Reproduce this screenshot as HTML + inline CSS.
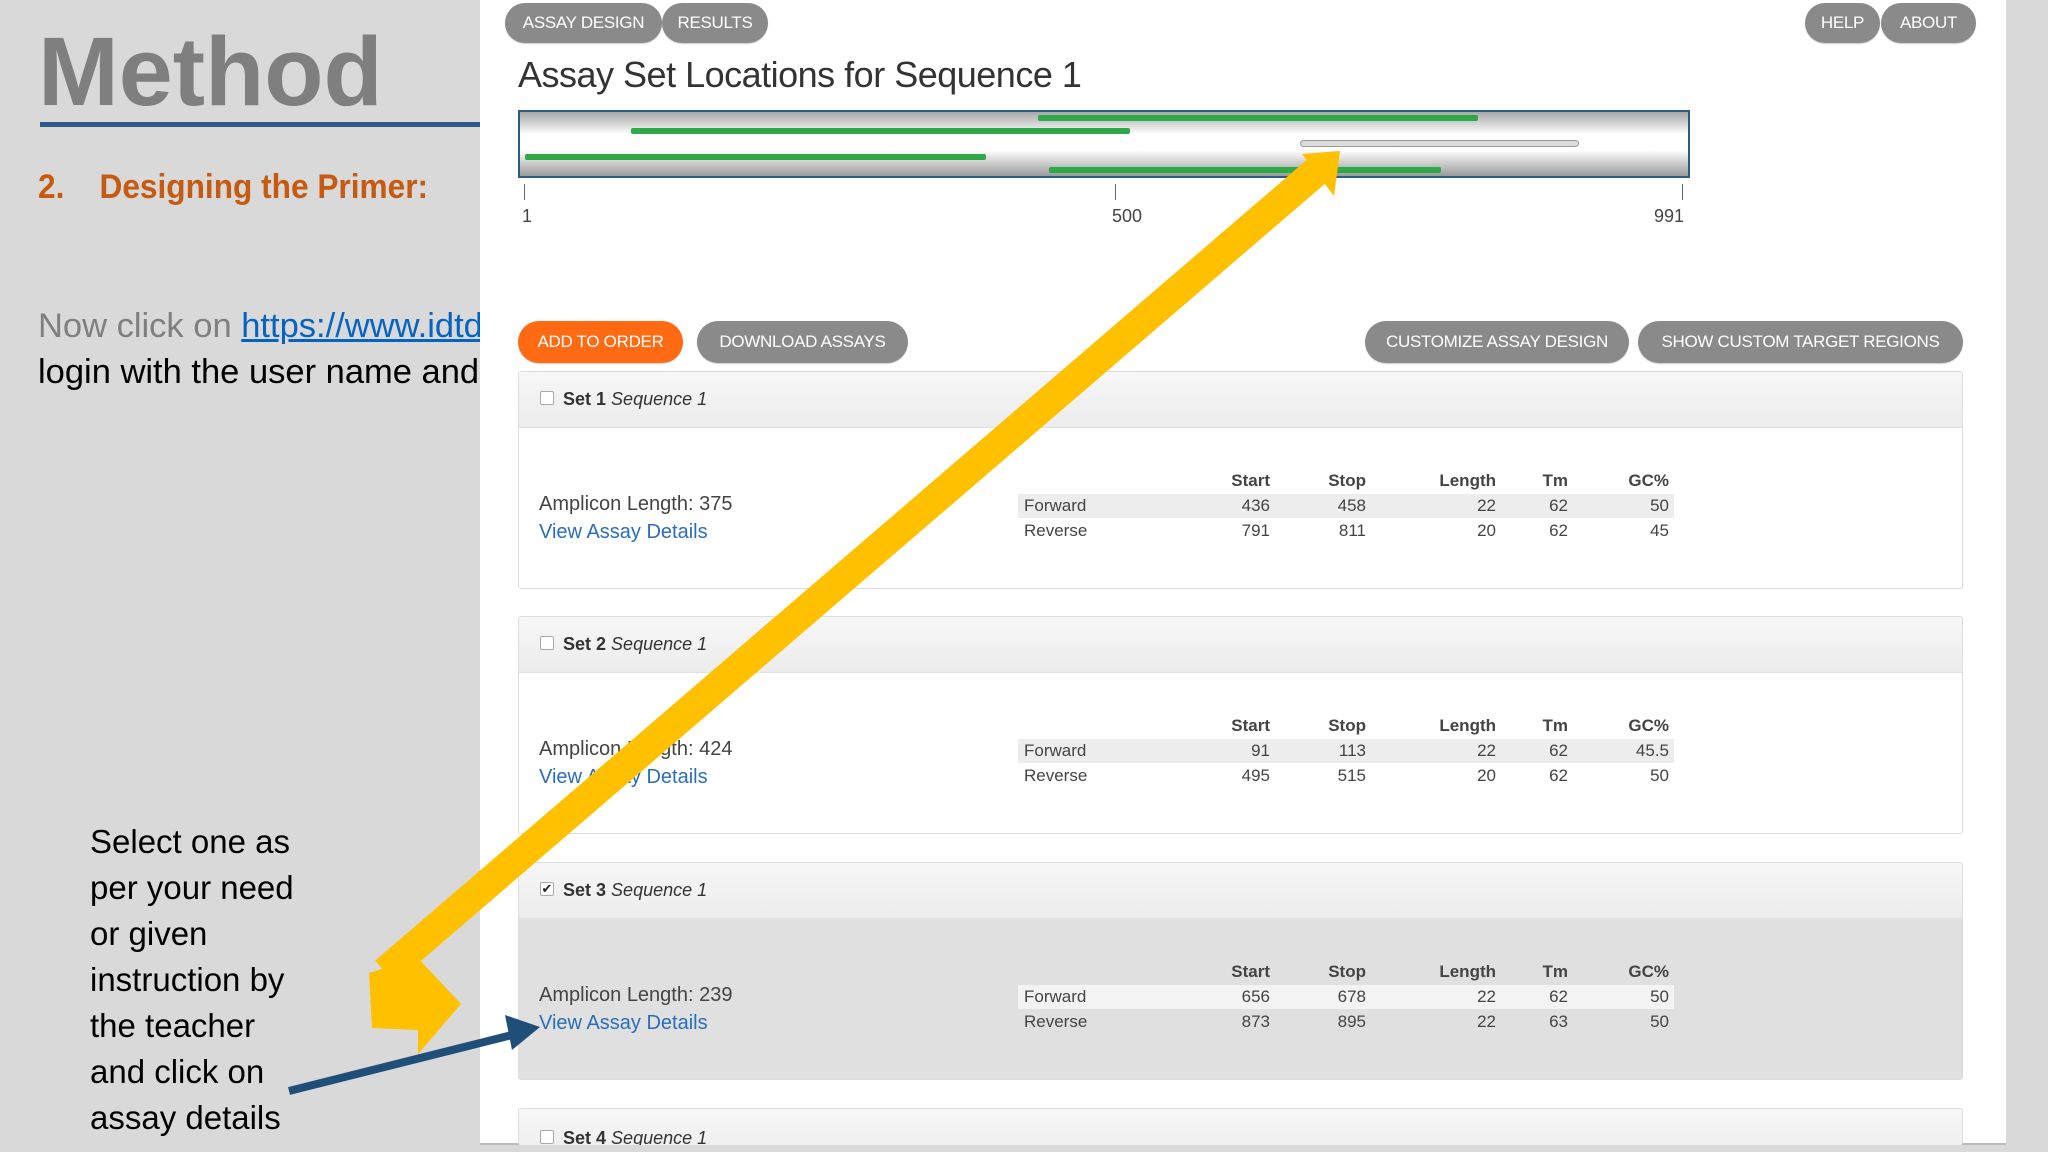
<!DOCTYPE html>
<html><head><meta charset="utf-8"><style>
*{margin:0;padding:0;box-sizing:border-box}
body{width:2048px;height:1152px;overflow:hidden;background:#d9d9d9;font-family:"Liberation Sans",sans-serif;position:relative}
.abs{position:absolute}
.web{left:480px;top:0;width:1526px;height:1145px;background:#fff;border-bottom:2px solid #bbb}
.pill{position:absolute;height:40px;border-radius:20px;background:#8a8a8a;color:#fff;font-size:17px;display:flex;align-items:center;justify-content:center;letter-spacing:-0.3px;box-shadow:0 1px 1px rgba(0,0,0,.2)}
.pill.o{background:#ff6a13}
.panel{position:absolute;left:518px;width:1445px;height:218px;border:1px solid #ddd;border-radius:3px;background:#fff;overflow:hidden}
.hd{height:56px;background:linear-gradient(#f7f7f7,#ececec);border-bottom:1px solid #e0e0e0;position:relative}
.cb{position:absolute;left:21px;top:19px;width:14px;height:14px;border:1px solid #aaa;border-radius:2px;background:#fff;font-size:13px;line-height:12px;text-align:center;color:#222}
.ht{position:absolute;left:44px;top:17px;font-size:18px;color:#333}
.ht b{font-weight:bold}
.amp{position:absolute;left:20px;top:121px;font-size:20px;color:#444}
.vad{position:absolute;left:20px;top:149px;font-size:20px;color:#2a6ebb}
.row{position:absolute;left:499px;width:656px;height:24px}
.c{position:absolute;font-size:17px;color:#444;text-align:right}
.slide{color:#000;font-size:33px;line-height:46px}
</style></head><body>
<div class="abs" style="left:38px;top:16px;font-size:97px;font-weight:bold;color:#7f7f7f">Method</div>
<div class="abs" style="left:40px;top:122px;width:440px;height:5px;background:#2e5a87"></div>
<div class="abs" style="left:38px;top:168px;font-size:34px;font-weight:bold;color:#c55a11;white-space:nowrap;transform:scaleX(0.93);transform-origin:left">2.&nbsp;&nbsp;&nbsp;&nbsp;Designing the Primer:</div>
<div class="abs" style="left:38px;top:307px;font-size:34.5px;color:#7f7f7f;white-space:nowrap">Now click on <span style="color:#0563c1;text-decoration:underline">https://www.idtdna.com</span></div>
<div class="abs" style="left:38px;top:353px;font-size:34.5px;color:#000;white-space:nowrap">login with the user name and password</div>
<div class="abs slide" style="left:90px;top:819px">Select one as<br>per your need<br>or given<br>instruction by<br>the teacher<br>and click on<br>assay details</div>
<div class="abs" style="left:2006px;top:0;width:42px;height:1152px;background:#d9d9d9"></div>
<div class="abs web"></div>
<div class="pill" style="left:505px;top:3px;width:157px">ASSAY DESIGN</div>
<div class="pill" style="left:662px;top:3px;width:106px">RESULTS</div>
<div class="pill" style="left:1805px;top:3px;width:75px">HELP</div>
<div class="pill" style="left:1881px;top:3px;width:95px">ABOUT</div>
<div class="abs" style="left:518px;top:54px;font-size:36px;color:#333;letter-spacing:-0.5px">Assay Set Locations for Sequence 1</div>
<div class="abs" style="left:518px;top:110px;width:1172px;height:68px;border:2px solid #2e5c8a;background:linear-gradient(#a8a8a8,#fff 35%,#fff 60%,#9a9a9a)"></div>
<div class="abs" style="left:631px;top:128px;width:499px;height:6px;background:#2fa84a;border-radius:2px"></div>
<div class="abs" style="left:1038px;top:115px;width:440px;height:6px;background:#2fa84a;border-radius:2px"></div>
<div class="abs" style="left:525px;top:154px;width:461px;height:6px;background:#2fa84a;border-radius:2px"></div>
<div class="abs" style="left:1049px;top:167px;width:392px;height:6px;background:#2fa84a;border-radius:2px"></div>
<div class="abs" style="left:1300px;top:140px;width:279px;height:7px;background:#dcdcdc;border:1px solid #999;border-radius:4px"></div>
<div class="abs" style="left:524px;top:184px;width:1px;height:16px;background:#666"></div>
<div class="abs" style="left:1115px;top:184px;width:1px;height:16px;background:#666"></div>
<div class="abs" style="left:1682px;top:184px;width:1px;height:16px;background:#666"></div>
<div class="abs" style="left:522px;top:206px;font-size:18px;color:#444">1</div>
<div class="abs" style="left:1112px;top:206px;font-size:18px;color:#444">500</div>
<div class="abs" style="left:1654px;top:206px;font-size:18px;color:#444">991</div>
<div class="pill o" style="left:518px;top:321px;width:165px;height:42px;border-radius:21px">ADD TO ORDER</div>
<div class="pill" style="left:697px;top:321px;width:211px;height:42px;border-radius:21px">DOWNLOAD ASSAYS</div>
<div class="pill" style="left:1365px;top:321px;width:264px;height:42px;border-radius:21px">CUSTOMIZE ASSAY DESIGN</div>
<div class="pill" style="left:1638px;top:321px;width:325px;height:42px;border-radius:21px">SHOW CUSTOM TARGET REGIONS</div>

<div class="panel" style="top:371px">
 <div class="hd"><div class="cb"></div><div class="ht"><b>Set 1</b> <i>Sequence 1</i></div></div>
 <div class="amp">Amplicon Length: 375</div><div class="vad">View Assay Details</div>
 <div class="c" style="right:692px;top:99px;font-weight:bold">Start</div><div class="c" style="right:596px;top:99px;font-weight:bold">Stop</div><div class="c" style="right:466px;top:99px;font-weight:bold">Length</div><div class="c" style="right:394px;top:99px;font-weight:bold">Tm</div><div class="c" style="right:293px;top:99px;font-weight:bold">GC%</div>
 <div class="row" style="top:122px;background:#ededed"></div>
 <div class="c" style="left:505px;top:124px;text-align:left">Forward</div><div class="c" style="right:692px;top:124px">436</div><div class="c" style="right:596px;top:124px">458</div><div class="c" style="right:466px;top:124px">22</div><div class="c" style="right:394px;top:124px">62</div><div class="c" style="right:293px;top:124px">50</div>
 <div class="c" style="left:505px;top:149px;text-align:left">Reverse</div><div class="c" style="right:692px;top:149px">791</div><div class="c" style="right:596px;top:149px">811</div><div class="c" style="right:466px;top:149px">20</div><div class="c" style="right:394px;top:149px">62</div><div class="c" style="right:293px;top:149px">45</div>
</div>
<div class="panel" style="top:616px">
 <div class="hd"><div class="cb"></div><div class="ht"><b>Set 2</b> <i>Sequence 1</i></div></div>
 <div class="amp">Amplicon Length: 424</div><div class="vad">View Assay Details</div>
 <div class="c" style="right:692px;top:99px;font-weight:bold">Start</div><div class="c" style="right:596px;top:99px;font-weight:bold">Stop</div><div class="c" style="right:466px;top:99px;font-weight:bold">Length</div><div class="c" style="right:394px;top:99px;font-weight:bold">Tm</div><div class="c" style="right:293px;top:99px;font-weight:bold">GC%</div>
 <div class="row" style="top:122px;background:#ededed"></div>
 <div class="c" style="left:505px;top:124px;text-align:left">Forward</div><div class="c" style="right:692px;top:124px">91</div><div class="c" style="right:596px;top:124px">113</div><div class="c" style="right:466px;top:124px">22</div><div class="c" style="right:394px;top:124px">62</div><div class="c" style="right:293px;top:124px">45.5</div>
 <div class="c" style="left:505px;top:149px;text-align:left">Reverse</div><div class="c" style="right:692px;top:149px">495</div><div class="c" style="right:596px;top:149px">515</div><div class="c" style="right:466px;top:149px">20</div><div class="c" style="right:394px;top:149px">62</div><div class="c" style="right:293px;top:149px">50</div>
</div>
<div class="panel" style="top:862px;background:#e0e0e0">
 <div class="hd"><div class="cb">✔</div><div class="ht"><b>Set 3</b> <i>Sequence 1</i></div></div>
 <div class="amp">Amplicon Length: 239</div><div class="vad">View Assay Details</div>
 <div class="c" style="right:692px;top:99px;font-weight:bold">Start</div><div class="c" style="right:596px;top:99px;font-weight:bold">Stop</div><div class="c" style="right:466px;top:99px;font-weight:bold">Length</div><div class="c" style="right:394px;top:99px;font-weight:bold">Tm</div><div class="c" style="right:293px;top:99px;font-weight:bold">GC%</div>
 <div class="row" style="top:122px;background:#f3f3f3"></div>
 <div class="c" style="left:505px;top:124px;text-align:left">Forward</div><div class="c" style="right:692px;top:124px">656</div><div class="c" style="right:596px;top:124px">678</div><div class="c" style="right:466px;top:124px">22</div><div class="c" style="right:394px;top:124px">62</div><div class="c" style="right:293px;top:124px">50</div>
 <div class="c" style="left:505px;top:149px;text-align:left">Reverse</div><div class="c" style="right:692px;top:149px">873</div><div class="c" style="right:596px;top:149px">895</div><div class="c" style="right:466px;top:149px">22</div><div class="c" style="right:394px;top:149px">63</div><div class="c" style="right:293px;top:149px">50</div>
</div>
<div class="panel" style="top:1108px;height:37px;border-bottom:none">
 <div class="hd"><div class="cb" style="top:21px"></div><div class="ht" style="top:19px"><b>Set 4</b> <i>Sequence 1</i></div></div>
</div>

<svg class="abs" style="left:0;top:0" width="2048" height="1152">
 <line x1="1318" y1="170" x2="385" y2="972" stroke="#ffc000" stroke-width="30"/>
 <polygon points="1302,154 1340,151 1334,196" fill="#ffc000"/>
 <polygon points="369,973 418,958 461,1004 418,1054 418,1030 372,1028" fill="#ffc000"/>
 <line x1="289" y1="1091" x2="520" y2="1033" stroke="#1f4e79" stroke-width="8"/>
 <polygon points="540,1027 505,1015 512,1050" fill="#1f4e79"/>
</svg>
</body></html>
